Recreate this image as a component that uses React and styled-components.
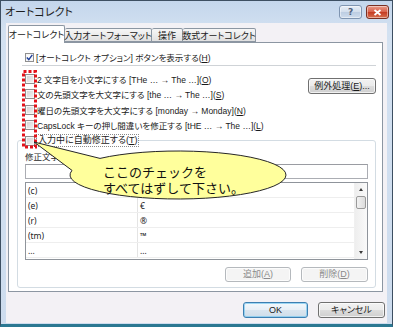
import React from "react";
import styled, { createGlobalStyle } from "styled-components";

const GlobalStyle = createGlobalStyle`
  html, body {
    margin: 0;
    padding: 0;
    background: #ffffff;
  }
`;

const Window = styled.div`
  position: relative;
  width: 393px;
  height: 327px;
  box-sizing: border-box;
  display: flex;
  flex-direction: column;
  background: linear-gradient(#c4d6ec, #d3e1f1 30px, #cddcee);
  border: 1px solid #3d4f62;
  border-bottom: 3px solid #2b7892;
  font-family: "Liberation Sans", "Noto Sans CJK JP", sans-serif;
  font-feature-settings: "palt" 1;
  font-size: 9px;
  color: #1a1a1a;
  overflow: hidden;
`;

const TitleBar = styled.div`
  height: 22px;
  display: flex;
  align-items: center;
  padding: 0 3px 0 4px;
  gap: 4px;
`;

const Title = styled.div`
  flex: 1;
  font-size: 11px;
  color: #1e1e1e;
  line-height: 1;
  margin-top: 1px;
`;

const CaptionButton = styled.div`
  width: 23px;
  height: 14px;
  box-sizing: border-box;
  display: flex;
  align-items: center;
  justify-content: center;
  border-radius: 3px;
  border: 1px solid ${(p) => (p.$close ? "#7a2f22" : "#7f95b1")};
  background: ${(p) =>
    p.$close
      ? "linear-gradient(#e99a89, #d8604a 50%, #c43a22 51%, #d8704f)"
      : "linear-gradient(#e7eef7, #d2deec 50%, #bccde2 51%, #cfdcec)"};
  box-shadow: inset 0 0 0 1px rgba(255, 255, 255, 0.45);
  color: #50627c;
  font-family: "DejaVu Sans", sans-serif;
  font-size: 9px;
  font-weight: bold;
`;

const Client = styled.div`
  flex: 1;
  margin: 0 5px 1px;
  background: #f3f1f5;
  display: flex;
  flex-direction: column;
  padding: 2px 2px 0;
`;

const TabRow = styled.div`
  height: 17px;
  display: flex;
  align-items: flex-end;
  position: relative;
  z-index: 1;
`;

const Tab = styled.div`
  width: ${(p) => p.$w}px;
  height: ${(p) => (p.$active ? 18 : 14)}px;
  margin-bottom: ${(p) => (p.$active ? -1 : 0)}px;
  box-sizing: border-box;
  display: flex;
  align-items: center;
  justify-content: center;
  border: 1px solid #8c96a2;
  border-bottom: ${(p) => (p.$active ? "none" : "1px solid #8c96a2")};
  border-left: ${(p) => (p.$first || p.$active ? "1px solid #8c96a2" : "none")};
  border-radius: 2px 2px 0 0;
  background: ${(p) =>
    p.$active ? "#ffffff" : "linear-gradient(#f6f6f6, #ececec 50%, #e0e0e0)"};
  white-space: nowrap;
  padding-top: ${(p) => (p.$active ? 0 : 1)}px;
`;

const Panel = styled.div`
  height: 250px;
  margin-right: 2px;
  box-sizing: border-box;
  border: 1px solid #8c96a2;
  background: #ffffff;
  padding: 8px 6px 0 8px;
  display: flex;
  flex-direction: column;
  font-size: 8.5px;
`;

const Box = styled.span`
  flex: none;
  width: ${(p) => p.$size}px;
  height: ${(p) => p.$size}px;
  box-sizing: border-box;
  border: 1px solid #8f8f8f;
  background: ${(p) =>
    p.$checked ? "#fbfbfb" : "linear-gradient(135deg, #d2d2d2, #f4f4f4)"};
  box-shadow: inset 0 0 0 1px #f7f7f7;
  display: flex;
  align-items: center;
  justify-content: center;
`;

const CheckRow = styled.div`
  display: flex;
  align-items: center;
  gap: ${(p) => p.$gap || 2}px;
  height: ${(p) => p.$h || 15.5}px;
  margin-left: ${(p) => p.$indent || 0}px;
  white-space: nowrap;
`;

const Separator = styled.div`
  height: 1px;
  background: #cfd3d7;
  margin: 2px 0 5px 5px;
`;

const OptionsBlock = styled.div`
  display: flex;
  justify-content: space-between;
  align-items: flex-start;
`;

const OptionList = styled.div`
  display: flex;
  flex-direction: column;
  margin-left: 8px;
`;

const Button = styled.button`
  width: ${(p) => p.$w}px;
  height: ${(p) => p.$h || 16}px;
  margin-top: ${(p) => p.$mt || 0}px;
  box-sizing: border-box;
  padding: 0;
  border-radius: 3px;
  border: 1px solid
    ${(p) => (p.$primary ? "#3c7fb1" : p.$off ? "#b5b9bd" : "#707070")};
  background: ${(p) =>
    p.$off
      ? "#f4f4f4"
      : p.$primary
      ? "linear-gradient(#f3f8fc, #e7eff6 50%, #d9e5ef 51%, #cfdde9)"
      : "linear-gradient(#f2f2f2, #ebebeb 50%, #dddddd 51%, #cfcfcf)"};
  box-shadow: inset 0 0 0 1px
    ${(p) => (p.$primary ? "rgba(120, 200, 240, 0.7)" : "rgba(255, 255, 255, 0.7)")};
  color: ${(p) => (p.$off ? "#8a8a8a" : "#1a1a1a")};
  font: inherit;
  font-size: 9px;
  line-height: 1;
  white-space: nowrap;
`;

const GroupBox = styled.fieldset`
  margin: 0;
  padding: 0 7px 5px;
  border: 1px solid #d3dce3;
  border-radius: 3px;
  min-width: 0;
`;

const Legend = styled.legend`
  padding: 0;
  margin: 0;
  font-size: 9px;
`;

const FocusText = styled.span`
  outline: 1px dotted #8a8a8a;
  padding: 0 1px;
  line-height: 11px;
`;

const LabelsRow = styled.div`
  display: flex;
  height: 13px;
  margin-top: 1px;
  align-items: center;
  white-space: nowrap;
`;

const FieldLabel = styled.div`
  width: ${(p) => p.$w || "auto"};
  color: #2a2a2a;
`;

const InputsRow = styled.div`
  display: flex;
  gap: 3px;
  margin-top: 1.5px;
`;

const TextInput = styled.div`
  height: 15px;
  box-sizing: border-box;
  width: ${(p) => (p.$w ? `${p.$w}px` : "auto")};
  flex: ${(p) => (p.$w ? "none" : 1)};
  border: 1px solid #abadb3;
  border-top-color: #9a9ca2;
  background: #ffffff;
`;

const List = styled.div`
  margin-top: 3px;
  height: 78px;
  box-sizing: border-box;
  border: 1px solid #8f949b;
  background: #ffffff;
  display: flex;
`;

const ListBody = styled.div`
  flex: 1;
  display: flex;
  flex-direction: column;
`;

const ListRow = styled.div`
  display: grid;
  grid-template-columns: 111px 1fr;
  height: 15px;
  box-sizing: border-box;
  border-bottom: 1px solid #eeeeee;
`;

const Cell = styled.div`
  display: flex;
  align-items: center;
  padding-left: 2px;
  border-left: ${(p) => (p.$second ? "1px solid #e4e4e4" : "none")};
  font-family: "Noto Sans", "DejaVu Sans", sans-serif;
  font-size: 8.5px;
  color: #222222;
`;

const ScrollBar = styled.div`
  width: 12px;
  display: flex;
  flex-direction: column;
  align-items: center;
  background: linear-gradient(90deg, #eeeeee, #fafafa);
  border-left: 1px solid #f0f0f0;
`;

const Arrow = styled.div`
  width: 0;
  height: 0;
  margin: 5px 0;
  border-left: 2.5px solid transparent;
  border-right: 2.5px solid transparent;
  ${(p) =>
    p.$down ? "border-top: 3px solid #3a3a3a;" : "border-bottom: 3px solid #3a3a3a;"}
`;

const Thumb = styled.div`
  width: 10px;
  height: 13px;
  box-sizing: border-box;
  border: 1px solid #9a9a9a;
  border-radius: 2px;
  background: linear-gradient(90deg, #f2f2f2, #dcdcdc);
`;

const Spacer = styled.div`
  flex: 1;
`;

const GroupButtons = styled.div`
  display: flex;
  justify-content: flex-end;
  gap: 10px;
  margin-top: 7px;
`;

const Footer = styled.div`
  flex: 1;
  display: flex;
  justify-content: flex-end;
  align-items: flex-start;
  gap: 10px;
  padding-top: 10px;
`;

const Overlay = styled.svg`
  position: absolute;
  left: -1px;
  top: -1px;
  pointer-events: none;
`;

const CalloutText = styled.div`
  position: absolute;
  left: 102px;
  top: 163px;
  font-family: "Noto Sans CJK JP", sans-serif;
  font-size: 13px;
  line-height: 16px;
  font-feature-settings: normal;
  color: #111111;
  white-space: nowrap;
`;

const Check = ({ checked, size = 10 }) => (
  <Box $size={size} $checked={checked}>
    {checked && (
      <svg width="7" height="7" viewBox="0 0 7 7">
        <path d="M0.8 3.6 L2.8 5.6 L6.3 0.9" fill="none" stroke="#1f3f9a" strokeWidth="1.4" />
      </svg>
    )}
  </Box>
);

const options = [
  ["2 文字目を小文字にする [THe … → The …](", "O", ")"],
  ["文の先頭文字を大文字にする [the … → The …](", "S", ")"],
  ["曜日の先頭文字を大文字にする [monday → Monday](", "N", ")"],
  ["CapsLock キーの押し間違いを修正する [tHE … → The …](", "L", ")"],
];

const entries = [
  ["(c)", "©"],
  ["(e)", "€"],
  ["(r)", "®"],
  ["(tm)", "™"],
  ["...", "…"],
];

export default function App() {
  return (
    <>
      <GlobalStyle />
      <Window>
        <TitleBar>
          <Title>オートコレクト</Title>
          <CaptionButton>?</CaptionButton>
          <CaptionButton $close>
            <svg width="9" height="7" viewBox="0 0 9 7">
              <path d="M1.5 1 L7.5 6 M7.5 1 L1.5 6" stroke="#ffffff" strokeWidth="1.8" />
            </svg>
          </CaptionButton>
        </TitleBar>
        <Client>
          <TabRow>
            <Tab $w={57} $active $first>オートコレクト</Tab>
            <Tab $w={87}>入力オートフォーマット</Tab>
            <Tab $w={31}>操作</Tab>
            <Tab $w={73}>数式オートコレクト</Tab>
          </TabRow>
          <Panel>
            <CheckRow $h={12} $indent={8} $gap={2}>
              <Check checked size={9} />
              <span>
                [オートコレクト オプション] ボタンを表示する(<u>H</u>)
              </span>
            </CheckRow>
            <Separator />
            <OptionsBlock>
              <OptionList>
                {options.map(([a, k, b]) => (
                  <CheckRow key={k}>
                    <Check />
                    <span>
                      {a}
                      <u>{k}</u>
                      {b}
                    </span>
                  </CheckRow>
                ))}
              </OptionList>
              <Button $w={68} $mt={7}>
                例外処理(<u>E</u>)...
              </Button>
            </OptionsBlock>
            <GroupBox>
              <Legend>
                <CheckRow>
                  <Check />
                  <FocusText>
                    入力中に自動修正する(<u>T</u>)
                  </FocusText>
                </CheckRow>
              </Legend>
              <LabelsRow>
                <FieldLabel $w="113px">
                  修正文字列(<u>R</u>):
                </FieldLabel>
                <FieldLabel>
                  修正後の文字列(<u>W</u>):
                </FieldLabel>
              </LabelsRow>
              <InputsRow>
                <TextInput $w={110} />
                <TextInput />
              </InputsRow>
              <List>
                <ListBody>
                  {entries.map(([k, v]) => (
                    <ListRow key={k}>
                      <Cell>{k}</Cell>
                      <Cell $second>{v}</Cell>
                    </ListRow>
                  ))}
                </ListBody>
                <ScrollBar>
                  <Arrow />
                  <Thumb />
                  <Spacer />
                  <Arrow $down />
                </ScrollBar>
              </List>
              <GroupButtons>
                <Button $w={66} $h={15} $off disabled>
                  追加(<u>A</u>)
                </Button>
                <Button $w={67} $h={15} $off disabled>
                  削除(<u>D</u>)
                </Button>
              </GroupButtons>
            </GroupBox>
          </Panel>
          <Footer>
            <Button $w={65} $primary>
              OK
            </Button>
            <Button $w={67}>キャンセル</Button>
          </Footer>
        </Client>
        <Overlay width="393" height="327" viewBox="0 0 393 327">
          <rect
            x="23.5"
            y="71.5"
            width="12"
            height="75.5"
            fill="none"
            stroke="#e3121a"
            strokeWidth="3"
            strokeDasharray="3 2"
          />
          <path
            d="M100 158.4 A108 24 0 1 1 72 170.4 L34 142 Z"
            fill="#ffff9c"
            stroke="#262626"
            strokeWidth="1"
          />
        </Overlay>
        <CalloutText>
          ここのチェックを
          <br />
          すべてはずして下さい。
        </CalloutText>
      </Window>
    </>
  );
}
